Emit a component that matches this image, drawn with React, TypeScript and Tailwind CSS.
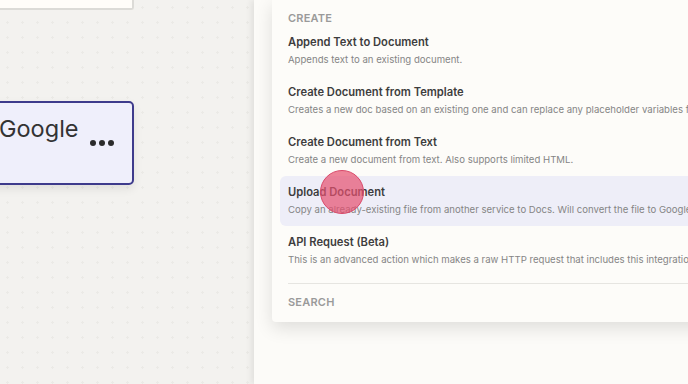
import React from "react";

const actions = [
	{
		title: "Append Text to Document",
		desc: "Appends text to an existing document.",
	},
	{
		title: "Create Document from Template",
		desc: "Creates a new doc based on an existing one and can replace any placeholder variables found in your template doc.",
	},
	{
		title: "Create Document from Text",
		desc: "Create a new document from text. Also supports limited HTML.",
	},
	{
		title: "Upload Document",
		desc: "Copy an already-existing file from another service to Docs. Will convert the file to Google Doc format if possible.",
		active: true,
	},
	{
		title: "API Request (Beta)",
		desc: "This is an advanced action which makes a raw HTTP request that includes this integration's authentication.",
	},
];

export default function App() {
	return (
		<div
			className="relative flex h-[384px] w-[688px] overflow-hidden bg-[#f3f2ef]"
			style={{ fontFamily: "Inter, 'Noto Sans', sans-serif" }}
		>
			{/* canvas */}
			<div className="relative flex w-[254px] shrink-0 flex-col bg-[radial-gradient(#ebeae6_1px,transparent_1.2px)] bg-[size:15px_15px]">
				<div className="h-[10px] w-[134px] rounded-br-[3px] border-r-2 border-b-2 border-[#dcdbd7] bg-[#fffdf9]" />
				<div className="mt-[91px] flex h-[84px] w-[155px] -ml-[21px] items-start rounded-[5px] border-2 border-[#3e3b8c] bg-[#efeffb] pl-[18px] pt-[12px] shadow-[0_4px_10px_rgba(0,0,0,0.08)]">
					<span className="text-[23.5px] leading-[28px] text-[#333]">Google</span>
					<span className="ml-[11px] mt-[25px] flex gap-[3px]">
						<span className="h-[6px] w-[6px] rounded-full bg-[#2b2b2b]" />
						<span className="h-[6px] w-[6px] rounded-full bg-[#2b2b2b]" />
						<span className="h-[6px] w-[6px] rounded-full bg-[#2b2b2b]" />
					</span>
				</div>
			</div>

			{/* side panel */}
			<div className="relative flex-1 bg-[#fcfbf8] shadow-[-3px_0_6px_rgba(0,0,0,0.07)]">
				<div className="ml-[18px] w-[440px] rounded-bl-[4px] bg-[#fdfcf9] px-2 pt-[10px] pb-[12px] shadow-[0_6px_18px_rgba(0,0,0,0.12)]">
					<div className="px-2 text-[11px] font-semibold leading-[16px] tracking-[0.02em] text-[#9a9a9a]">
						CREATE
					</div>
					{actions.map((a) => (
						<div
							key={a.title}
							className={`h-[50px] rounded-l-[6px] px-2 pt-[9px] ${a.active ? "bg-[#eeeef8]" : ""}`}
						>
							<div className="whitespace-nowrap text-[11.2px] font-semibold leading-[14px] text-[#3d3d3d]">
								{a.title}
							</div>
							<div className="mt-[5px] whitespace-nowrap text-[9.6px] leading-[12px] text-[#858585]">
								{a.desc}
							</div>
						</div>
					))}
					<div className="mx-2 mt-[7px] border-t border-[#e6e5e1]" />
					<div className="px-2 pt-[10px] text-[11px] font-semibold leading-[16px] tracking-[0.02em] text-[#9a9a9a]">
						SEARCH
					</div>
				</div>
			</div>

			{/* cursor */}
			<div className="absolute left-[320px] top-[170px] h-[44px] w-[44px] rounded-full border border-[#d94a6a] bg-[#e5506f]/70" />
		</div>
	);
}
